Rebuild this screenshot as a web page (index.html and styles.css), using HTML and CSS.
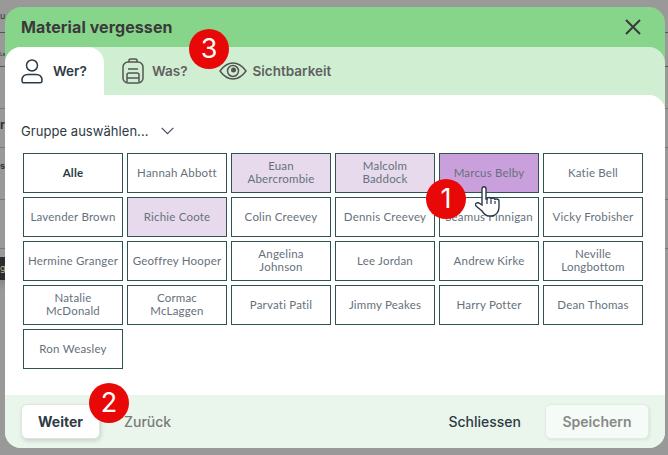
FILE: index.html
```html
<!DOCTYPE html>
<html lang="de">
<head>
<meta charset="utf-8">
<title>Material vergessen</title>
<link rel="stylesheet" href="styles.css">
</head>
<body>
<div class="backdrop">
  <span class="bit bit-u">u</span>
  <span class="bit bit-le">Le</span>
  <span class="bit bit-r">r</span>
  <span class="bit bit-s">s</span>
  <span class="bit bit-g">g</span>
</div>
<div class="modal">
  <header class="head">
    <h1 class="title">Material vergessen</h1>
    <svg class="close" width="18" height="18" viewBox="0 0 18 18"><path d="M2 2L16 16M16 2L2 16" stroke="#3a3a3a" stroke-width="2" fill="none"/></svg>
  </header>
  <div class="tabs-wrap">
    <nav class="tabs">
      <div class="tab active">
        <svg width="24" height="26" viewBox="0 0 24 26" fill="none" stroke="#2b3a46" stroke-width="1.5"><circle cx="12" cy="7.5" r="5.5"/><path d="M2 22.5c0-4 2.5-6 6-6h8c3.500 0 6 2 6 6 0 1.500-.7 2.300-2 2.300H4c-1.300 0-2-.8-2-2.300z"/></svg>
        <span>Wer?</span>
      </div>
      <div class="tab">
        <svg width="24" height="26" viewBox="0 0 24 26" fill="none" stroke="#555" stroke-width="1.5"><path d="M8 4V2.500C8 1.500 9 1 10 1h4c1 0 2 .5 2 1.500V4"/><rect x="2" y="4" width="20" height="21" rx="5"/><path d="M7 11h10M6 24v-7c0-1 .7-2 2-2h8c1.300 0 2 1 2 2v7M6 20h12"/></svg>
        <span>Was?</span>
      </div>
      <div class="tab">
        <svg width="28" height="18" viewBox="0 0 28 18" fill="none" stroke="#555" stroke-width="1.500"><path d="M1 9C5 3.500 9 1 14 1s9 2.500 13 8c-4 5.500-8 8-13 8S5 14.500 1 9z"/><circle cx="14" cy="9" r="5.500"/><circle cx="14.500" cy="8" r="2.500" fill="#555" stroke="none"/></svg>
        <span>Sichtbarkeit</span>
      </div>
    </nav>
    <main class="body">
      <div class="group">
        <span>Gruppe auswählen...</span>
        <svg width="13" height="8" viewBox="0 0 13 8" fill="none" stroke="#4a5560" stroke-width="1.300"><path d="M.7.9L6.500 6.700 12.300.9"/></svg>
      </div>
      <div class="grid">
        <div class="cell all">Alle</div>
        <div class="cell">Hannah Abbott</div>
        <div class="cell light">Euan<br>Abercrombie</div>
        <div class="cell light">Malcolm<br>Baddock</div>
        <div class="cell strong">Marcus Belby</div>
        <div class="cell">Katie Bell</div>
        <div class="cell">Lavender Brown</div>
        <div class="cell light">Richie Coote</div>
        <div class="cell">Colin Creevey</div>
        <div class="cell">Dennis Creevey</div>
        <div class="cell">Seamus Finnigan</div>
        <div class="cell">Vicky Frobisher</div>
        <div class="cell">Hermine Granger</div>
        <div class="cell">Geoffrey Hooper</div>
        <div class="cell">Angelina<br>Johnson</div>
        <div class="cell">Lee Jordan</div>
        <div class="cell">Andrew Kirke</div>
        <div class="cell">Neville<br>Longbottom</div>
        <div class="cell">Natalie<br>McDonald</div>
        <div class="cell">Cormac<br>McLaggen</div>
        <div class="cell">Parvati Patil</div>
        <div class="cell">Jimmy Peakes</div>
        <div class="cell">Harry Potter</div>
        <div class="cell">Dean Thomas</div>
        <div class="cell">Ron Weasley</div>
      </div>
    </main>
    <footer class="foot">
      <button class="btn primary">Weiter</button>
      <span class="link muted">Zurück</span>
      <span class="spacer"></span>
      <span class="link">Schliessen</span>
      <button class="btn disabled">Speichern</button>
    </footer>
  </div>
</div>
<div class="badge b1">1</div>
<div class="badge b2">2</div>
<div class="badge b3">3</div>
<svg class="hand" width="26" height="32" viewBox="0 0 26 32"><path d="M7 3c0-3 4-3 4 0v10l1 0c0-2 4-2 4 .5 0-2 4-2 4 .5 0-1.500 4-1.500 4 1v6c0 5-3 9-8 9h-2c-3 0-5-2-7-5l-6-5c-1.500-2 .5-4 3-3l3 2z" fill="#fff" stroke="#2b3a46" stroke-width="1.400"/><path d="M12 13v5M16 14v4M20 15v3" stroke="#2b3a46" stroke-width="1.200"/></svg>
</body>
</html>
```
FILE: styles.css
```css
* { box-sizing: border-box; }
html, body { margin: 0; height: 455px; overflow: hidden; }
body {
  position: relative;
  background: #999;
  padding: 7px 3px 7px 5px;
  font-family: "Inter", "Liberation Sans", sans-serif;
}
.backdrop {
  position: absolute;
  inset: 0;
  overflow: hidden;
  background:
    linear-gradient(#555, #555) 0 32px / 100% 1px no-repeat,
    linear-gradient(#555, #555) 0 66px / 100% 1px no-repeat,
    linear-gradient(#777, #777) 0 108px / 100% 1px no-repeat,
    linear-gradient(#777, #777) 0 147px / 100% 1px no-repeat,
    linear-gradient(#777, #777) 0 199px / 100% 1px no-repeat,
    linear-gradient(#777, #777) 0 248px / 100% 1px no-repeat,
    linear-gradient(#2c2c2c, #2c2c2c) 0 257px / 5px 23px no-repeat,
    linear-gradient(#8a8a8a, #999) 0 280px / 5px 10px no-repeat,
    #999;
}
.bit {
  position: absolute;
  left: 0;
  font-size: 9px;
  line-height: 12px;
  color: #333;
}
.bit-u { top: 10px; }
.bit-le { top: 48px; font-size: 5px; }
.bit-r { top: 119px; font-size: 12px; font-weight: 700; }
.bit-s { top: 160px; font-weight: 700; }
.bit-g { top: 262px; color: #c9b48a; }
.modal {
  position: relative;
  width: 660px;
  height: 441px;
  border-radius: 16px;
  background: #87d58a;
  display: flex;
  flex-direction: column;
  overflow: hidden;
}
.head {
  height: 40px;
  flex: none;
  display: flex;
  align-items: center;
  justify-content: space-between;
  padding: 0 23px 0 16px;
}
.title {
  margin: 0;
  font-size: 16px;
  font-weight: 700;
  color: #3a3a3a;
  letter-spacing: .1px;
}
.tabs-wrap {
  flex: 1;
  background: #d0eed2;
  border-radius: 16px 16px 0 0;
  display: flex;
  flex-direction: column;
  min-height: 0;
}
.tabs { height: 48px; flex: none; display: flex; }
.tab {
  display: flex;
  align-items: center;
  gap: 7px;
  padding: 0 15px;
  font-size: 13.500px;
  font-weight: 600;
  color: #5f5f5f;
}
.tab:nth-child(2) { padding: 0 31px 0 17px; }
.tab:nth-child(3) { padding-left: 0; gap: 6px; }
.tab.active {
  width: 99px;
  gap: 9px;
  background: #fff;
  color: #2e3a44;
  border-radius: 16px 16px 0 0;
}
.body {
  flex: 1;
  background: #fff;
  border-radius: 0 16px 0 0;
  padding: 0 18px;
  min-height: 0;
}
.group {
  height: 58px;
  margin-left: -2px;
  padding-top: 13px;
  display: flex;
  align-items: center;
  gap: 12px;
  font-size: 13px;
  letter-spacing: .05px;
  color: #2e3a44;
}
.grid {
  display: grid;
  grid-template-columns: repeat(6, 100px);
  grid-auto-rows: 40px;
  gap: 4px;
}
.cell {
  border: 1px solid #2f5350;
  display: flex;
  align-items: center;
  justify-content: center;
  text-align: center;
  white-space: nowrap;
  padding: 0 0 2px;
  font-family: "Lato", sans-serif;
  font-size: 11.500px;
  line-height: 13px;
  letter-spacing: .2px;
  color: #66717c;
}
.cell.all { font-weight: 700; color: #2e3a44; }
.cell.light { background: #e8daed; }
.cell.strong { background: #c9a0dc; }
.foot {
  height: 53px;
  flex: none;
  background: #eaf6eb;
  display: flex;
  align-items: center;
  padding: 0 16px;
  font-size: 14px;
}
.btn {
  height: 35px;
  border-radius: 6px;
  font: 600 14px "Inter", sans-serif;
  border: 1px solid #e3e3e3;
  box-shadow: 1px 2px 4px rgba(0,0,0,.15);
  padding: 0;
}
.btn.primary { width: 79px; background: #fff; color: #2e3a44; font-weight: 700; }
.btn.disabled { width: 104px; background: #f5fbf6; color: #888; border-color: #e4ebe5; margin-left: 24px; box-shadow: 1px 1px 3px rgba(0,0,0,.08); }
.link { color: #2e3a44; font-weight: 500; }
.link.muted { color: #7a7a7a; margin-left: 24px; }
.spacer { flex: 1; }
.badge {
  position: absolute;
  width: 40px;
  height: 40px;
  border-radius: 50%;
  background: #e90808;
  color: #fff;
  font-size: 27px;
  line-height: 40px;
  text-align: center;
}
.b1 { left: 426px; top: 179px; }
.b2 { left: 89px; top: 383px; }
.b3 { left: 189px; top: 29px; }
.hand { position: absolute; left: 475px; top: 186px; }
.close { display: block; }
```
